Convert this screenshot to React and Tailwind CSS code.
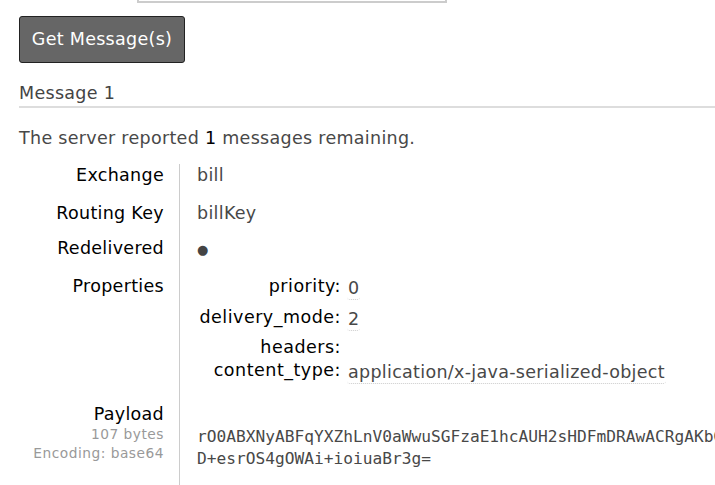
const rows = [
  { label: 'Exchange', value: 'bill', h: 'h-[38px]' },
  { label: 'Routing Key', value: 'billKey', h: 'h-[35px]' },
  { label: 'Redelivered', value: '●', h: 'h-[38px]', dot: true },
];

const props = [
  { k: 'priority', v: '0', h: 'h-[31px]' },
  { k: 'delivery_mode', v: '2', h: 'h-[30px]' },
  { k: 'headers', v: null, h: 'h-[23px]' },
  { k: 'content_type', v: 'application/x-java-serialized-object', h: 'h-[31px]' },
];

function Val({ children }) {
  return (
    <span className="inline-block rounded-[3px] border-b border-dotted border-[#ccc] px-[1px] leading-[22px] text-[#484848]">
      {children}
    </span>
  );
}

export default function App() {
  return (
    <div className="h-[485px] w-[715px] overflow-hidden bg-white font-['DejaVu_Sans',Verdana,sans-serif] text-[17.5px] tracking-[0.3px] text-[#484848]">
      {/* cut-off form row */}
      <div className="-mt-[30px] flex items-center pl-[19px]">
        <div className="w-[110px] shrink-0 text-right leading-[22px] text-black">Messages:</div>
        <div className="ml-[8px] h-[33px] w-[310px] border-2 border-[#ccc] bg-white" />
      </div>

      <div className="pl-[19px] pt-[13px]">
        <button className="flex h-[47px] w-[166px] items-center justify-center rounded-[3px] border-[1.5px] border-[#222] bg-[#666] text-white">
          Get Message(s)
        </button>
      </div>

      <div className="ml-[19px] mt-[19px] border-b-2 border-[#ddd] pb-[2px] leading-[22px] text-[#444]">
        Message 1
      </div>

      <p className="ml-[19px] mt-[19px] leading-[22px]">
        The server reported <span className="text-black">1</span> messages remaining.
      </p>

      <div className="mt-[15px] flex flex-col">
        {rows.map((r) => (
          <div key={r.label} className={`flex ${r.h}`}>
            <div className="w-[164px] shrink-0 text-right leading-[22px] text-black">{r.label}</div>
            <div className="ml-[15px] border-l border-[#ccc] pl-[17px] leading-[22px]">
              {r.dot ? <span className="text-[13px] text-[#444]">●</span> : r.value}
            </div>
          </div>
        ))}

        <div className="flex h-[128px]">
          <div className="w-[164px] shrink-0 text-right leading-[22px] text-black">Properties</div>
          <div className="ml-[15px] flex flex-col border-l border-[#ccc] pl-[17px]">
            {props.map((p) => (
              <div key={p.k} className={`flex ${p.h}`}>
                <div className="w-[144px] shrink-0 text-right leading-[22px] tracking-[0.5px] text-black">{p.k}:</div>
                <div className="ml-[6px] whitespace-nowrap">{p.v !== null && <Val>{p.v}</Val>}</div>
              </div>
            ))}
          </div>
        </div>

        <div className="flex h-[90px]">
          <div className="flex w-[164px] shrink-0 flex-col items-end">
            <div className="leading-[22px] text-black">Payload</div>
            <div className="text-[13.75px] leading-[18px] tracking-[0.5px] text-[#999]">107 bytes</div>
            <div className="text-[13.75px] leading-[20px] tracking-[0.5px] text-[#999]">Encoding: base64</div>
          </div>
          <div className="ml-[15px] min-w-0 flex-1 overflow-hidden border-l border-[#ccc] pl-[17px] pt-[23px] tracking-normal">
            <div className="whitespace-nowrap font-['DejaVu_Sans_Mono',monospace] text-[16.2px] leading-[22px] text-[#484848]">
              rO0ABXNyABFqYXZhLnV0aWwuSGFzaE1hcAUH2sHDFmDRAwACRgAKbG9hZEZhY3RvckkACXRocmVzaG9sZHhwP0AAAAAAAAx3CAAAABAAAAABdAAEbmFtZXQABGJpbGx4
            </div>
            <div className="whitespace-nowrap font-['DejaVu_Sans_Mono',monospace] text-[16.2px] leading-[22px] text-[#484848]">
              D+esrOS4gOWAi+ioiuaBr3g=
            </div>
          </div>
        </div>
      </div>
    </div>
  );
}
